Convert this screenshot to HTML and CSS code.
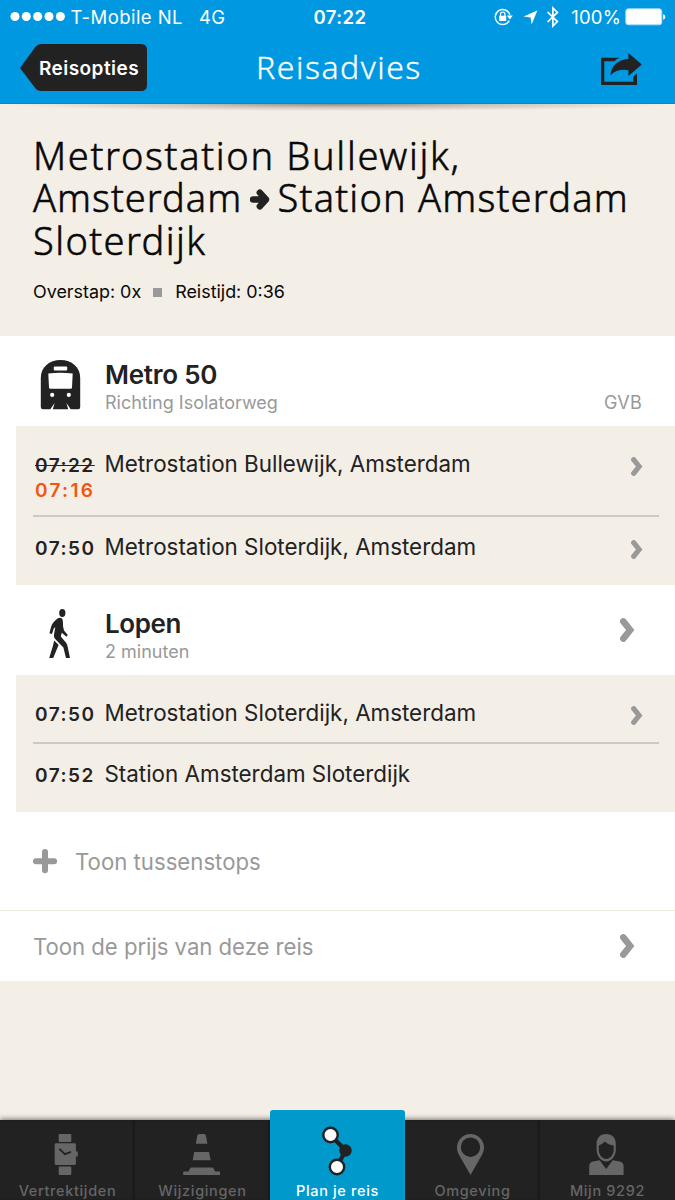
FILE: index.html
```html
<!DOCTYPE html>
<html lang="nl">
<head>
<meta charset="utf-8">
<title>Reisadvies</title>
<link rel="stylesheet" href="styles.css">
</head>
<body>
<svg class="defs" width="0" height="0">
  <symbol id="chevron" viewBox="0 0 15 24"><path d="M3.300 3.400 L10.200 12 L3.300 20.600" fill="none" stroke="#999" stroke-width="6.500" stroke-linecap="round" stroke-linejoin="miter"/></symbol>
</svg>
<div class="screen">
  <header class="top">
    <div class="status">
      <div class="status-left">
        <svg width="56" height="10" viewBox="0 0 56 10" fill="#fff"><circle cx="5" cy="4.500" r="4.500"/><circle cx="16.300" cy="4.500" r="4.500"/><circle cx="27.700" cy="4.500" r="4.500"/><circle cx="39" cy="4.500" r="4.500"/><circle cx="50.400" cy="4.500" r="4.500"/></svg>
        <span class="carrier">T-Mobile NL</span>
        <span class="network">4G</span>
      </div>
      <span class="clock">07:22</span>
      <div class="status-right">
        <svg width="20" height="18" viewBox="0 0 20 18"><path d="M15.300 12.600 A7.500 7.500 0 1 1 15.900 6.800" fill="none" stroke="#fff" stroke-width="1.400"/><path d="M12.800 7.400h6l-3 4z" fill="#fff"/><rect x="5.200" y="7.800" width="7" height="5.200" rx=".6" fill="#fff"/><path d="M6.500 8V6.200a2.200 2.200 0 0 1 4.400 0V8" fill="none" stroke="#fff" stroke-width="1.200"/></svg>
        <svg class="loc" width="15" height="15" viewBox="0 0 15 15"><path d="M14.400 .6 L8.600 14.400 L7.600 7.400 L.6 6.400 Z" fill="#fff"/></svg>
        <svg class="bt" width="14" height="22" viewBox="0 0 14 22"><path d="M1.600 6 L11.400 15.600 L6.900 20 V2 L11.400 6.400 L1.600 16" fill="none" stroke="#fff" stroke-width="1.700"/></svg>
        <span class="percent">100%</span>
        <svg class="battery" width="41" height="18" viewBox="0 0 41 18"><rect x=".8" y=".8" width="36" height="16" rx="2.600" fill="#fff" stroke="#a6dbf7" stroke-width="1"/><path d="M38.200 6.200q2.200.6 2.200 2.800t-2.200 2.800z" fill="#fff"/></svg>
      </div>
    </div>
    <nav class="nav">
      <a class="back"><svg class="back-shape" width="128" height="47" viewBox="0 0 128 47"><path d="M0 24 L15.500 2.800 Q17.800 0 21 0 H121 Q127 0 127 6 V41 Q127 47 121 47 H21 Q17.800 47 15.500 44.400 Z" fill="#222"/></svg><span>Reisopties</span></a>
      <h1>Reisadvies</h1>
      <svg class="share" width="41" height="33" viewBox="0 0 41 33"><path d="M18.500 4.700 H0 V32 H36 V20.600 L32.400 23.800 V28.800 H3.300 V8.300 H13.500 Q15.500 6 18.500 4.700 Z" fill="#222"/><path d="M27.400 0 L40.800 11.400 L27.400 23 V17.200 Q16.500 15.500 9.400 22.200 Q11 7.500 27.400 6 Z" fill="#222"/></svg>
    </nav>
  </header>

  <section class="summary">
    <h2><span class="t1">Metrostation Bullewijk,</span><br><span class="t2">Amsterdam</span><svg class="arrow" width="20" height="21" viewBox="0 0 20 21"><path d="M3 10.500H15 M9.800 3.700 L16 10.500 L9.800 17.300" fill="none" stroke="#222" stroke-width="6.400" stroke-linecap="round" stroke-linejoin="round"/></svg><span class="t3">Station Amsterdam</span><br><span class="t4">Sloterdijk</span></h2>
    <p class="meta"><span>Overstap: 0x</span><i></i><span>Reistijd: 0:36</span></p>
  </section>

  <main>
    <section class="leg">
      <div class="leg-head">
        <svg class="mode" width="41" height="50" viewBox="-0.800 0 41 50"><path d="M0 47 V18 C0 7 8.500 0 19.700 0 S39.400 7 39.400 18 V47 Q39.400 49.300 37.400 49.300 H2 Q0 49.300 0 47Z" fill="#222"/><rect x="13" y="6.400" width="13.400" height="4" rx="1" fill="#fff"/><path d="M7.500 13.600 Q19.700 12 31.900 13.600 L31.200 27.600 Q31.100 28.800 29.900 28.800 H9.500 Q8.300 28.800 8.200 27.600Z" fill="#fff"/><circle cx="11.400" cy="34.900" r="2.100" fill="#fff"/><circle cx="28" cy="34.900" r="2.100" fill="#fff"/><path d="M13.800 43 L9 50 H11.800 Z M25.600 43 L30.400 50 H27.600 Z" fill="#fff"/></svg>
        <div class="leg-title"><h3 class="metro">Metro 50</h3><p>Richting Isolatorweg</p></div>
        <span class="operator">GVB</span>
      </div>
      <ul class="stops">
        <li class="delayed"><div class="time"><s>07:22</s><b>07:16</b></div><span class="place">Metrostation Bullewijk, Amsterdam</span><svg class="chev" width="12" height="19"><use href="#chevron"/></svg></li>
        <li><div class="time">07:50</div><span class="place">Metrostation Sloterdijk, Amsterdam</span><svg class="chev" width="12" height="19"><use href="#chevron"/></svg></li>
      </ul>
    </section>
    <section class="leg">
      <div class="leg-head">
        <svg class="mode" width="41" height="50" viewBox="0 0 41 50"><g fill="#222"><ellipse cx="22.300" cy="4" rx="3.100" ry="4"/><path d="M17.500 9.500 Q20 8 22 9.500 Q23.200 11 23 17 L24 21.500 L27.800 26 L26.400 27.800 L21.800 23.800 L20.800 27.600 L26.300 34 Q27.300 35.500 27.600 37.500 L30 49 H26 L23.400 38.600 L15.200 30 Q13.400 28 14 25.500 L15.300 18 L13.600 19.800 L12 25 L9.400 24.200 L11.200 17.500 Q12 14 17.500 9.500Z"/><path d="M14.200 31.500 L18.600 36 L13.200 49 H9.200 L12.800 37.200Z"/></g></svg>
        <div class="leg-title"><h3 class="walk">Lopen</h3><p>2 minuten</p></div>
        <svg class="chev big" width="15" height="24"><use href="#chevron"/></svg>
      </div>
      <ul class="stops short">
        <li><div class="time">07:50</div><span class="place">Metrostation Sloterdijk, Amsterdam</span><svg class="chev" width="12" height="19"><use href="#chevron"/></svg></li>
        <li><div class="time">07:52</div><span class="place">Station Amsterdam Sloterdijk</span></li>
      </ul>
    </section>
    <div class="more"><svg width="25" height="25" viewBox="0 0 25 25"><path d="M12 3.100V21.300M2.900 12.200H21.100" stroke="#999" stroke-width="6" stroke-linecap="round"/></svg><span>Toon tussenstops</span></div>
    <div class="price"><span>Toon de prijs van deze reis</span><svg class="chev big" width="15" height="24"><use href="#chevron"/></svg></div>
  </main>

  <footer class="tabs">
    <a class="tab"><svg width="40" height="42" viewBox="0.500 0 40 42"><g fill="#666"><rect x="11.200" y="0" width="12.600" height="8" rx="1"/><rect x="7.200" y="9.200" width="21.200" height="21.800" rx="1.400"/><rect x="28" y="17.300" width="2.300" height="5.400" rx="1.100"/><rect x="11.200" y="32.400" width="12.600" height="8.600" rx="1"/></g><path d="M11.800 14.800 L17.400 20.200 L23.400 17.800" fill="none" stroke="#222" stroke-width="1.800"/></svg><span>Vertrektijden</span></a>
    <a class="tab"><svg width="40" height="42" viewBox="1 0 40 42"><g fill="#666"><path d="M17.300 0h4.600q1.700 0 2 1.500l1.500 8.300h-11.600l1.500-8.300q.3-1.500 2-1.500z"/><path d="M12.200 18h14.800l1.700 8.200h-18z"/><path d="M9.500 33.400h20.600q1 0 1.400 1l1.600 3.100h4.100q.8 0 .8.8v2.700H1.200v-2.700q0-.8.8-.8h4.500l1.600-3.100q.4-1 1.400-1z"/></g></svg><span>Wijzigingen</span></a>
    <a class="tab active"><svg width="40" height="52" viewBox="0.500 0.500 40 52"><path d="M13 11.500 L28 27 L19.500 43.500" fill="none" stroke="#222" stroke-width="4.200"/><circle cx="28" cy="27" r="6.200" fill="#222"/><circle cx="13" cy="11.500" r="7.200" fill="#fff" stroke="#222" stroke-width="2.400"/><circle cx="19.500" cy="43.500" r="7.200" fill="#fff" stroke="#222" stroke-width="2.400"/></svg><span>Plan je reis</span></a>
    <a class="tab"><svg width="40" height="42" viewBox="0.500 0 40 42"><path fill-rule="evenodd" fill="#666" d="M18 0a13.500 13.500 0 0 1 13.500 13.500c0 5-3 9-5.500 13.500L18 41 10 27c-2.500-4.500-5.500-8.500-5.500-13.500A13.500 13.500 0 0 1 18 0zM18 3.500a9.700 9.700 0 1 0 0 19.400a9.700 9.700 0 1 0 0-19.400z"/></svg><span>Omgeving</span></a>
    <a class="tab"><svg width="40" height="42" viewBox="0.800 0 40 42"><path fill="#666" d="M2 41V32Q2 28 7 27.300L12.500 26.300L19 35L25.500 26.300L31 27.300Q36.400 28 36.400 32V41Z"/><path fill="#666" fill-rule="evenodd" d="M19 0C25 0 28.600 4 28.600 10V16C28.600 22 24 27.500 19 27.500S9.400 22 9.400 16V10C9.400 4 13 0 19 0ZM11.600 11.500V16C11.600 20.500 15 25 19 25S26.500 20.500 26.500 16V11.500Q21 11 17.500 7.500Q15 10.500 11.600 11.500Z"/></svg><span>Mijn 9292</span></a>
  </footer>
</div>
</body>
</html>
```
FILE: styles.css
```css
* { box-sizing: border-box; margin: 0; padding: 0; }
body { background: #f3eee6; color: #222; font-family: Inter, "Liberation Sans", sans-serif; white-space: nowrap; overflow: hidden; }
svg { display: block; flex: none; }
.defs { position: absolute; }
.screen { width: 675px; height: 1200px; display: flex; flex-direction: column; }

.top { position: relative; height: 104px; background: #0099e1; color: #fff; flex: none; border-bottom: 1px solid #078ac9; }
.top::after { content: ""; position: absolute; left: 0; right: 0; top: 104px; height: 7px; background: radial-gradient(ellipse 50% 100% at 50% 0, rgba(85, 70, 70, .6), rgba(120, 100, 90, .28) 50%, transparent); }
.status { height: 34px; display: grid; grid-template-columns: 1fr auto 1fr; align-items: center; padding: 0 9px 0 10px; font-size: 18.5px; line-height: 34px; }
.status-left, .status-right { display: flex; align-items: center; }
.status-right { justify-content: flex-end; }
.carrier { margin-left: 4.5px; letter-spacing: .45px; }
.network { margin-left: 16px; letter-spacing: .3px; }
.clock { font-weight: 570; letter-spacing: .4px; padding-left: 4px; }
.loc { margin-left: 9px; }
.bt { margin-left: 8px; }
.percent { margin-left: 11px; letter-spacing: .15px; }
.battery { margin-left: 4px; }
.nav { height: 70px; display: grid; grid-template-columns: 1fr auto 1fr; align-items: start; padding: 0 33px 0 20px; }
.back { display: grid; margin-top: 10px; width: 128px; }
.back > * { grid-area: 1 / 1; }
.back span { padding-left: 19px; font-size: 19px; font-weight: 560; line-height: 50px; letter-spacing: .45px; }
.nav h1 { font: 300 32px/40px "Noto Sans", "Open Sans", sans-serif; letter-spacing: 1.5px; margin-top: 13px; padding-left: 16px; -webkit-text-stroke: .3px #fff; }
.share { justify-self: end; margin-top: 19px; }

.summary { height: 232px; flex: none; padding: 30px 33px 0; color: #080808; }
.summary h2 { font: 300 38px/42.3px "Noto Sans", "Open Sans", sans-serif; -webkit-text-stroke: .55px #080808; }
.t1 { letter-spacing: 1.68px; }
.t2 { letter-spacing: 1px; }
.t3 { letter-spacing: 1.2px; }
.t4 { letter-spacing: 1.4px; }
.arrow { display: inline-block; margin: 0 8px 0 7.5px; vertical-align: 2px; }
.meta { display: flex; align-items: center; margin-top: 19px; font-size: 17.9px; line-height: 24px; }
.meta i { width: 9px; height: 9px; background: #999; margin: 2px 13px 0 12px; }

main { background: #fff; flex: none; height: 645px; }
.leg-head { height: 90px; display: flex; padding: 24px 33px 0 40px; }
.leg-title { margin-left: 24px; flex: 1; }
.leg-head h3 { font-size: 26px; line-height: 30px; font-weight: 560; }
.leg-head .metro { letter-spacing: -.25px; }
.leg-head .walk { letter-spacing: -.4px; }
.leg-head p { font-size: 18px; line-height: 26px; color: #999; }
.operator { font-size: 18px; line-height: 26px; color: #999; letter-spacing: .3px; margin-top: 30px; }
.stops { list-style: none; background: #f3eee6; margin-left: 16px; padding: 0 16px 0 17px; height: 159px; }
.stops li { display: flex; align-items: flex-start; height: 68px; padding: 15px 16px 0 2px; }
.stops .delayed { height: 91px; padding-top: 23px; }
.stops li:first-child { border-bottom: 2px solid #cbc8c5; }
.short { height: 137px; }
.short li:first-child { height: 69px; padding-top: 23px; }
.time { width: 69.5px; font-size: 19px; line-height: 26px; font-weight: 560; letter-spacing: 1.5px; padding-top: 4px; }
.time s, .time b { display: block; font-weight: inherit; line-height: 25px; }
.time b { color: #f5540a; letter-spacing: 2.3px; }
.place { font-size: 22.4px; line-height: 30px; flex: 1; }
.chev { margin-top: 8px; }
.big { margin: 9px 7px 0 0; }
.more { height: 99px; border-bottom: 1px solid #ece9df; display: flex; align-items: center; padding-left: 33px; gap: 17px; }
.more, .price { color: #999; font-size: 22.2px; }
.price { height: 70px; display: flex; justify-content: space-between; align-items: center; padding: 0 33px; letter-spacing: -.05px; }
.price .big { margin-top: 0; }

.tabs { margin-top: auto; height: 80px; flex: none; display: grid; grid-template-columns: repeat(5, 135px); background: #222; box-shadow: 0 -1px 5px rgba(40, 30, 20, .6); }
.tab { height: 80px; display: flex; flex-direction: column; align-items: center; padding-top: 14px; color: #666; font-size: 14.5px; line-height: 20px; font-weight: 550; letter-spacing: .65px; box-shadow: inset -2px 0 2px #1a1a1a; }
.tab span { margin-top: 5px; }
.active { height: 90px; margin-top: -10px; background: #09c; border-radius: 3px 3px 0 0; color: #fff; box-shadow: none; }
.tab:last-child { box-shadow: none; }
```
